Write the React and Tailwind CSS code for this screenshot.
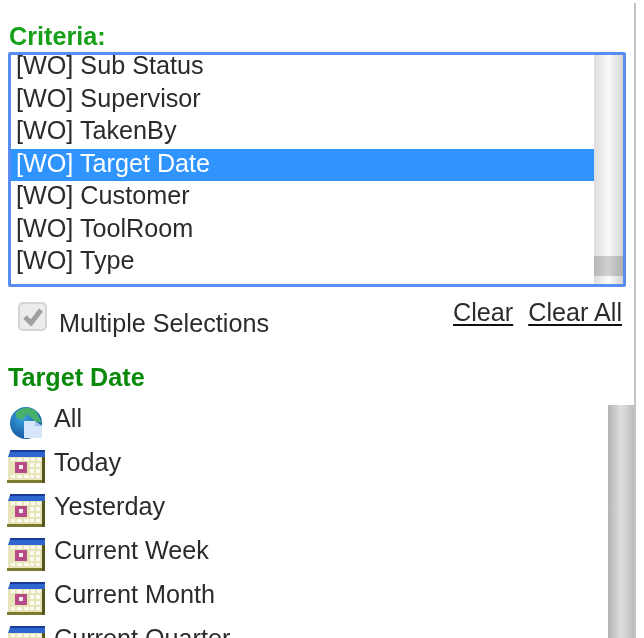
function Calendar() {
  return (
    <svg width="38" height="33" viewBox="0 0 38 33" className="shrink-0">
      <rect x="1" y="6" width="35" height="25" fill="#e6e4b8" />
      <rect x="0" y="30" width="38" height="3" fill="#7a7a30" />
      <rect x="35" y="2" width="3" height="31" fill="#55551c" />
      <path d="M1 7 L3 1 H38 V7 Z" fill="#2f66d0" />
      <rect x="3" y="0" width="35" height="2" fill="#1a3a98" />
      <g fill="#fbfbf0">
        <rect x="4" y="8" width="4" height="3" /><rect x="10" y="8" width="5" height="3" /><rect x="17" y="8" width="5" height="3" /><rect x="24" y="8" width="4" height="3" /><rect x="30" y="8" width="4" height="3" />
        <rect x="23" y="13" width="4" height="4" /><rect x="29" y="13" width="4" height="4" />
        <rect x="23" y="19" width="4" height="4" /><rect x="29" y="19" width="4" height="4" />
        <rect x="4" y="25" width="4" height="3" /><rect x="10" y="25" width="5" height="3" /><rect x="17" y="25" width="5" height="3" /><rect x="23" y="25" width="4" height="3" /><rect x="29" y="25" width="4" height="3" />
      </g>
      <rect x="8" y="12" width="12" height="11" fill="#b84a88" />
      <rect x="12" y="15" width="4" height="4" fill="#f6ecf2" />
    </svg>
  );
}
function Globe() {
  return (
    <svg width="38" height="33" viewBox="0 0 38 33" className="shrink-0">
      <defs>
        <radialGradient id="g" cx="0.4" cy="0.35" r="0.75">
          <stop offset="0" stopColor="#3aa0dc" />
          <stop offset="1" stopColor="#0f4f9a" />
        </radialGradient>
      </defs>
      <circle cx="19" cy="16" r="16" fill="url(#g)" />
      <path d="M9 5 Q19 -3 29 4 L35 16 L28 14 L20 7 L15 13 L9 10 Z" fill="#46b06c" />
      <path d="M17 14 H28 L35 19 V31 H17 Z" fill="#d6e6fa" />
      <path d="M28 14 V19 H35 Z" fill="#a6c2ea" />
    </svg>
  );
}
const rows = ["[WO] Sub Status", "[WO] Supervisor", "[WO] TakenBy", "[WO] Target Date", "[WO] Customer", "[WO] ToolRoom", "[WO] Type"];
const items = [["All", true], ["Today"], ["Yesterday"], ["Current Week"], ["Current Month"], ["Current Quarter"]];
export default function App() {
  return (
    <div className="h-[638px] w-[644px] overflow-hidden bg-white pt-[3px] font-['Liberation_Sans',Arial,sans-serif] text-[25.2px] text-[#2b2b2b] blur-[0.5px]">
      <div className="h-[635px] w-[636px] border-r-2 border-[#c4c4c4] pt-[19px]">
        <div className="pl-[9px] leading-[28px] font-bold text-[#17a01a]">Criteria:</div>
        <div className="ml-[8px] mt-[2px] flex h-[235px] w-[618px] overflow-hidden rounded-[2px] border-[3px] border-[#5a8cf0]">
          <div className="min-w-0 flex-1 overflow-hidden">
            <div className="-mt-[4px]">
              {rows.map((r, i) => (
                <div key={r} className={`h-[32.5px] pl-[5px] leading-[29px] whitespace-nowrap ${i === 3 ? "bg-[#3094ff] text-white" : ""}`}>{r}</div>
              ))}
            </div>
          </div>
          <div className="flex w-[29px] shrink-0 flex-col bg-gradient-to-r from-[#dcdcdc] via-[#fbfbfb] to-[#d4d4d4] pt-[201px]">
            <div className="h-[20px] bg-gradient-to-r from-[#b8b8b8] via-[#d0d0d0] to-[#b0b0b0]" />
          </div>
        </div>
        <div className="flex h-[76px] items-start justify-between pl-[18px] pr-[12px]">
          <div className="flex pt-[15px]">
            <div className="flex h-[29px] w-[29px] items-center justify-center rounded-[5px] border-2 border-[#d4d4d4] bg-[#ececec]">
              <svg width="20" height="18" viewBox="0 0 20 18"><path d="M2 9 L8 15 L18 2" fill="none" stroke="#a0a0a0" strokeWidth="5" /></svg>
            </div>
            <span className="ml-[12px] mt-[7px] leading-[28px]">Multiple Selections</span>
          </div>
          <div className="flex gap-[15px] pt-[11px] leading-[28px]">
            <span className="underline decoration-[#111] underline-offset-[3px]">Clear</span>
            <span className="underline decoration-[#111] underline-offset-[3px]">Clear All</span>
          </div>
        </div>
        <div className="pl-[8px] leading-[28px] font-bold text-[#0a8a0a]">Target Date</div>
        <div className="relative mt-[14px]">
          <div className="absolute right-0 top-0 h-[260px] w-[26px] bg-gradient-to-r from-[#b4b4b4] via-[#dedede] to-[#bcbcbc]" />
          {items.map(([t, g]) => (
            <div key={t} className="flex h-[44px] pl-[7px]">
              <div className={g ? "pt-[2px]" : "pt-px"}>{g ? <Globe /> : <Calendar />}</div>
              <span className="ml-[9px] -mt-[2px] leading-[30px] whitespace-nowrap">{t}</span>
            </div>
          ))}
        </div>
      </div>
    </div>
  );
}
